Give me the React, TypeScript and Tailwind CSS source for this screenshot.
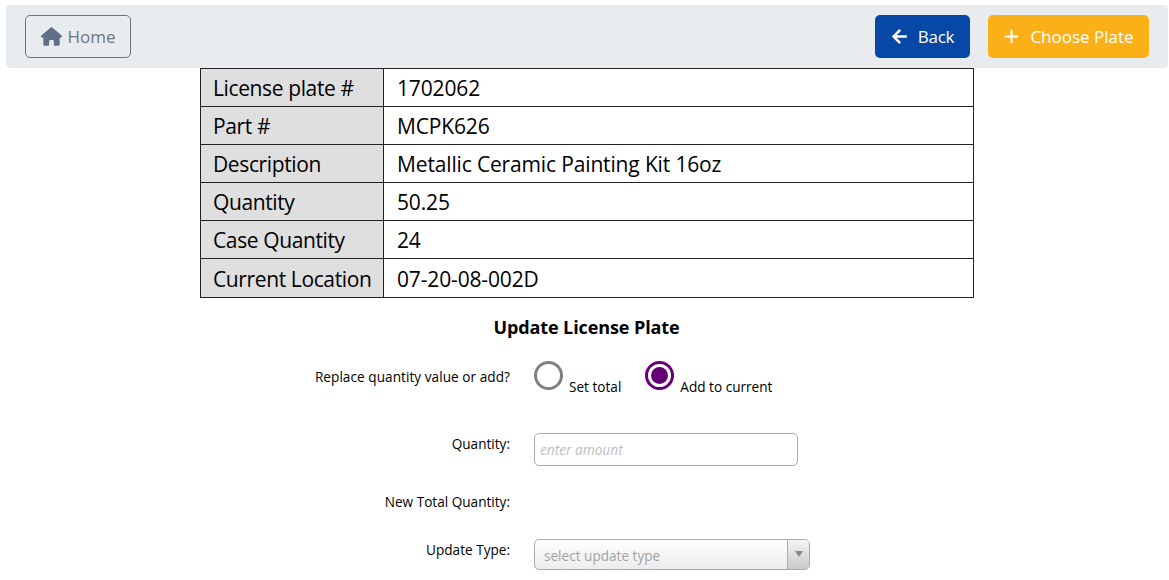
import React from 'react';
import { FaArrowLeft } from 'react-icons/fa';
import { FaHouse, FaPlus } from 'react-icons/fa6';

const plateRows = [
  ['License plate #', '1702062'],
  ['Part #', 'MCPK626'],
  ['Description', 'Metallic Ceramic Painting Kit 16oz'],
  ['Quantity', '50.25'],
  ['Case Quantity', '24'],
  ['Current Location', '07-20-08-002D'],
];

const App = () => {
  return (
    <div className="h-[580px] w-[1169px] overflow-hidden bg-white pt-[5px] font-['Open_Sans','Noto_Sans',sans-serif] text-black">
      <nav className="mx-[6px] mr-px flex h-[63px] items-center justify-between rounded-[4px] bg-[#e9ecef] px-[19px]">
        <button className="flex h-[43px] w-[106px] items-center justify-center gap-[5px] rounded-[5px] border border-[#6c757d] pl-[1px] text-[17px] text-[#6c757d]">
          <FaHouse className="text-[21px] text-[#5f6f86]" />
          Home
        </button>
        <div className="flex gap-[18px]">
          <button className="flex h-[43px] w-[95px] items-center justify-center gap-[10px] rounded-[5px] bg-[#0747a6] text-[17px] tracking-[-0.3px] text-white">
            <FaArrowLeft className="text-[17px]" />
            Back
          </button>
          <button className="flex h-[43px] w-[161px] items-center justify-center gap-[10px] rounded-[5px] bg-[#fcb017] text-[17px] text-white">
            <FaPlus className="text-[17px]" />
            Choose Plate
          </button>
        </div>
      </nav>

      <table className="ml-[200px] w-[774px] table-fixed border-collapse text-[21px]">
        <tbody>
          {plateRows.map(([label, value]) => (
            <tr key={label} className="h-[38.1px]">
              <td className="w-[183px] whitespace-nowrap border border-[#222] bg-[#dfdfdf] px-3 pt-[2.5px] pb-0 tracking-[-0.38px]">{label}</td>
              <td className="whitespace-nowrap border border-[#222] px-[13px] pt-[2.5px] pb-0 tracking-[-0.15px]">{value}</td>
            </tr>
          ))}
        </tbody>
      </table>

      <h2 className="mt-[17px] ml-[4px] text-center text-[18px] leading-[24px] font-bold tracking-[-0.1px]">Update License Plate</h2>

      <div className="mt-[22px] grid grid-cols-[510px_1fr] items-start gap-x-6 text-[13.6px]">
        <label className="mt-[7px] text-right leading-[18px] tracking-[0.05px]">Replace quantity value or add?</label>
        <div className="flex h-[30px] items-start">
          <div className="h-[29px] w-[29px] rounded-full border-[3px] border-[#808080] bg-white" />
          <span className="mt-[17px] ml-[6px] leading-[18px]">Set total</span>
          <div className="ml-[24px] flex h-[29px] w-[29px] items-center justify-center rounded-full border-[3px] border-[#660077] bg-white">
            <div className="h-[17px] w-[17px] rounded-full bg-[#660077]" />
          </div>
          <span className="mt-[17px] ml-[6px] leading-[18px]">Add to current</span>
        </div>

        <label className="mt-[44px] text-right leading-[18px]">Quantity:</label>
        <div className="mt-[42px] flex h-[33px] w-[264px] items-center rounded-[5px] border border-[#ababab] px-[5px] pt-[3px] text-[13.7px] text-[#bdbdbd] italic">
          enter amount
        </div>

        <label className="mt-[27px] text-right leading-[18px]">New Total Quantity:</label>
        <div className="mt-[27px] h-[18px]" />

        <label className="mt-[30px] text-right leading-[18px]">Update Type:</label>
        <div className="mt-[28px] flex h-[31px] w-[276px] items-stretch overflow-hidden rounded-[5px] border border-[#ababab] bg-gradient-to-b from-white to-[#ececec] text-[13.6px] text-[#a3a3a3]">
          <div className="flex flex-1 items-center pt-[4px] pl-[9px]">select update type</div>
          <div className="flex w-[22px] items-center justify-center border-l border-[#ababab] bg-gradient-to-b from-[#f5f5f5] to-[#c9c9c9]">
            <svg width="8" height="6" viewBox="0 0 8 6"><path d="M0 0h8L4 6z" fill="#888888" /></svg>
          </div>
        </div>
      </div>
    </div>
  );
};

export default App;
